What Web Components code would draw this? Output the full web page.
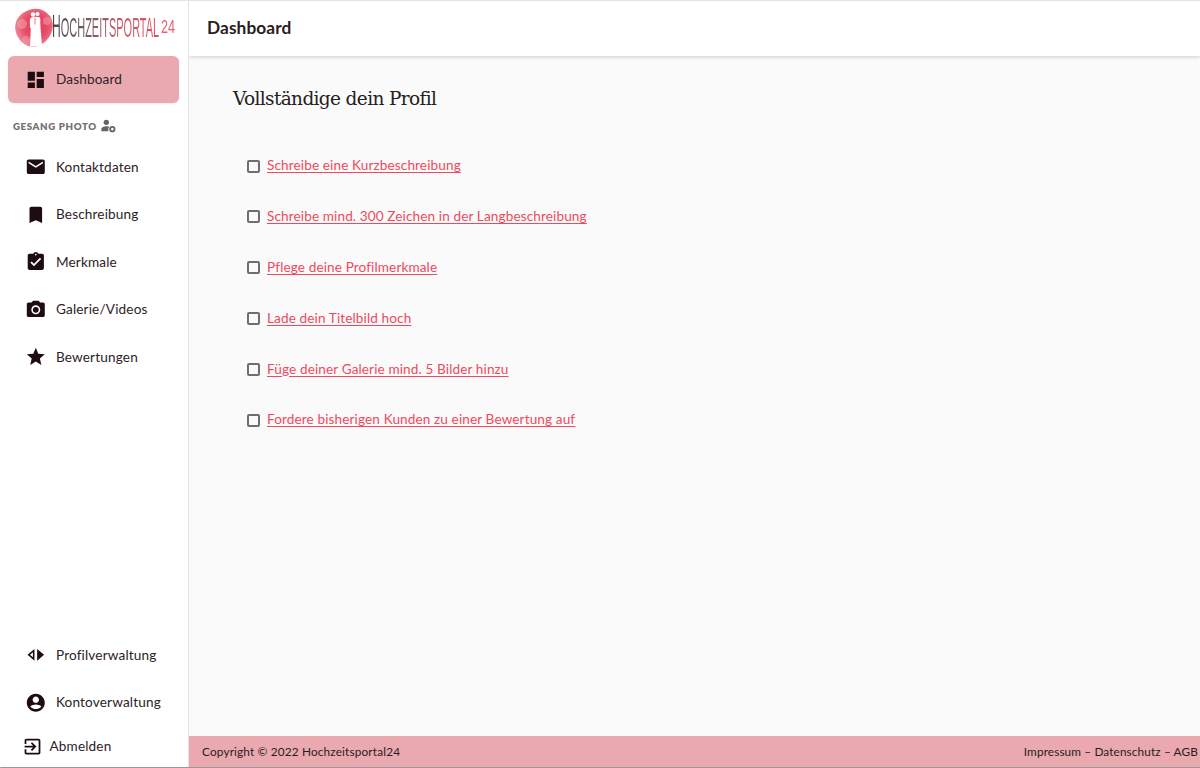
<!DOCTYPE html>
<html lang="de"><head><meta charset="utf-8"><title>Dashboard</title>
<style>
html,body{margin:0;height:100%;overflow:hidden;background:#fafafa}
body{font-family:Lato,"Open Sans",sans-serif;color:#2b1c20}
</style></head><body>
<app-shell>
  <side-bar slot="side">
    <nav-item slot="top" label="Dashboard" icon="dash" active></nav-item>
    <section-label slot="top">GESANG PHOTO</section-label>
    <nav-item slot="top" label="Kontaktdaten" icon="mail"></nav-item>
    <nav-item slot="top" label="Beschreibung" icon="bookmark"></nav-item>
    <nav-item slot="top" label="Merkmale" icon="check"></nav-item>
    <nav-item slot="top" label="Galerie/Videos" icon="camera"></nav-item>
    <nav-item slot="top" label="Bewertungen" icon="star"></nav-item>
    <nav-item slot="bottom" label="Profilverwaltung" icon="arrows"></nav-item>
    <nav-item slot="bottom" label="Kontoverwaltung" icon="account" style="height:47px"></nav-item>
    <nav-item slot="bottom" label="Abmelden" icon="exit" compact></nav-item>
  </side-bar>
  <top-bar slot="head">Dashboard</top-bar>
  <profile-list slot="main" heading="Vollständige dein Profil">
    <todo-item>Schreibe eine Kurzbeschreibung</todo-item>
    <todo-item>Schreibe mind. 300 Zeichen in der Langbeschreibung</todo-item>
    <todo-item>Pflege deine Profilmerkmale</todo-item>
    <todo-item>Lade dein Titelbild hoch</todo-item>
    <todo-item>Füge deiner Galerie mind. 5 Bilder hinzu</todo-item>
    <todo-item>Fordere bisherigen Kunden zu einer Bewertung auf</todo-item>
  </profile-list>
  <site-footer slot="foot"></site-footer>
</app-shell>
<script>
const ICONS={
 dash:'<path d="M3 13h8V3H3v10zm0 8h8v-6H3v6zm10 0h8V11h-8v10zm0-18v6h8V3h-8z"/>',
 mail:'<path d="M20 4H4c-1.1 0-2 .9-2 2v12c0 1.1.9 2 2 2h16c1.100 0 2-.9 2-2V6c0-1.100-.9-2-2-2zm0 4-8 5-8-5V6l8 5 8-5v2z"/>',
 bookmark:'<path d="M17 3H7c-1.100 0-2 .9-2 2v16l7-3 7 3V5c0-1.100-.9-2-2-2z"/>',
 check:'<path d="M19 3h-4.180C14.400 1.840 13.300 1 12 1s-2.400.84-2.820 2H5c-1.100 0-2 .9-2 2v14c0 1.100.9 2 2 2h14c1.100 0 2-.9 2-2V5c0-1.100-.9-2-2-2zm-7 0c.55 0 1 .45 1 1s-.45 1-1 1-1-.45-1-1 .45-1 1-1zm-2 14-4-4 1.410-1.410L10 14.170l6.590-6.590L18 9l-8 8z"/>',
 camera:'<circle cx="12" cy="12" r="3.200"/><path d="M9 2 7.170 4H4c-1.100 0-2 .9-2 2v12c0 1.100.9 2 2 2h16c1.100 0 2-.9 2-2V6c0-1.100-.9-2-2-2h-3.170L15 2H9zm3 15c-2.760 0-5-2.240-5-5s2.240-5 5-5 5 2.240 5 5-2.240 5-5 5z"/>',
 star:'<path d="M12 17.270 18.180 21l-1.640-7.030L22 9.240l-7.190-.61L12 2 9.190 8.630 2 9.240l5.460 4.730L5.820 21z"/>',
 arrows:'<path fill-rule="evenodd" d="M10.500 5.500v13L2.800 12l7.700-6.500zM8.800 9.200 5.500 12l3.300 2.800V9.200z"/><path d="M13.500 5.500 21.200 12l-7.700 6.500v-13z"/>',
 account:'<path d="M12 2C6.480 2 2 6.480 2 12s4.480 10 10 10 10-4.480 10-10S17.520 2 12 2zm0 3c1.930 0 3.500 1.570 3.500 3.500S13.930 12 12 12s-3.500-1.570-3.500-3.500S10.070 5 12 5zm0 14c-2.030 0-4.430-.82-6.140-2.880C7.550 14.800 9.680 14 12 14s4.450.8 6.140 2.120C16.430 18.180 14.030 19 12 19z"/>',
 exit:'<path d="M10.090 15.590 11.500 17l5-5-5-5-1.410 1.410L12.670 11H3v2h9.670l-2.580 2.590zM19 3H5c-1.110 0-2 .9-2 2v4h2V5h14v14H5v-4H3v4c0 1.100.89 2 2 2h14c1.100 0 2-.9 2-2V5c0-1.100-.9-2-2-2z"/>'
};
function def(name,html){
  customElements.define(name,class extends HTMLElement{
    connectedCallback(){
      if(this.shadowRoot)return;
      const s=this.attachShadow({mode:'open'});
      s.innerHTML=typeof html==='function'?html(this):html;
    }
  });
}
def('app-shell',`<style>
:host{display:grid;grid-template-columns:189px 1fr;grid-template-rows:56px 1fr 32px;height:768px;width:1200px;background:#fafafa;position:relative;overflow:hidden}
.s{grid-row:1/4;grid-column:1;display:flex;z-index:2}
.h{grid-column:2;grid-row:1;z-index:1;display:flex}
.m{grid-column:2;grid-row:2;display:flex}
.f{grid-column:2;grid-row:3;display:flex}
.line{position:absolute;left:0;right:0;top:0;height:1px;background:#e4e4e4;z-index:3}
.bot{position:absolute;left:0;right:0;bottom:0;height:1.500px;background:#9b9698;z-index:3;border-bottom-left-radius:6px}
</style><div class="line"></div><div class="s"><slot name="side"></slot></div><div class="h"><slot name="head"></slot></div><div class="m"><slot name="main"></slot></div><div class="f"><slot name="foot"></slot></div><div class="bot"></div>`);
def('side-bar',`<style>
:host{display:flex;flex-direction:column;width:188px;background:#fff;border-right:1px solid #e2e2e2;box-sizing:content-box}
.logo{height:56px;flex:none;display:flex;align-items:center;padding-left:14px;box-sizing:border-box}
.mark{width:40px;height:40px;flex:none;margin-right:-2px}
.w{width:109px;flex:none;height:30px;display:flex;align-items:center;margin-top:-1px}
.txt{font:400 28px "Liberation Sans",sans-serif;white-space:nowrap;transform:scaleX(.392);transform-origin:0 50%;display:inline-block;line-height:30px;background:linear-gradient(90deg,#4f4549 0,#6a5b5e 30%,#c25a68 60%,#e0505f 100%);-webkit-background-clip:text;background-clip:text;color:transparent}
.txt b{font-weight:400;font-size:31px}
.n{font:400 18px "Liberation Sans",sans-serif;color:#e2606f;transform:scaleX(.7);transform-origin:0 50%;display:inline-block;width:14px;white-space:nowrap;margin-top:-2px}
.top{flex:1;display:flex;flex-direction:column}
.bottom{display:flex;flex-direction:column;padding-bottom:1px}
</style><div class="logo"><svg class="mark" viewBox="0 0 40 40"><defs><radialGradient id="g" cx=".55" cy=".45" r=".55"><stop offset="0" stop-color="#e23a56"/><stop offset=".6" stop-color="#e64f67"/><stop offset="1" stop-color="#ee8593"/></radialGradient><filter id="b" x="-10%" y="-10%" width="120%" height="120%"><feGaussianBlur stdDeviation=".5"/></filter></defs><path d="M19 1c5-1 10 .500 13.500 3.500 3 2.500 5.500 5.500 6 10 .8 5-.2 10-2.700 13.500-2.800 4.500-7.500 9-13.500 10.500-5.500 1-10-.500-14-4C5 31.500 2 27 1.300 21.500.800 16 2.500 11 6 7.500 9.500 4 14 1.500 19 1z" fill="url(#g)" filter="url(#b)"/><circle cx="8" cy="16" r="5" fill="#f4a3ae" opacity=".55" filter="url(#b)"/><circle cx="33" cy="13" r="4" fill="#f4a3ae" opacity=".5" filter="url(#b)"/><circle cx="12" cy="32" r="4" fill="#f29ba7" opacity=".5" filter="url(#b)"/><circle cx="19" cy="6.500" r="2.300" fill="#fff"/><circle cx="23.500" cy="6" r="2.100" fill="#fff"/><path d="M16.500 10c2-1.500 7-1.800 9-.7 1 .8 1 3 .8 5.200l.3 6 1.400 17.500-12 .5.800-18-.8-1-.2-7z" fill="#fff"/><path d="M21 9.500v7" stroke="#e8536a" stroke-width=".8"/></svg><div class="w"><span class="txt"><b>H</b>OCHZEITSPORTAL</span></div><span class="n">24</span></div><div class="top"><slot name="top"></slot></div><div class="bottom"><slot name="bottom"></slot></div>`);
def('nav-item',el=>{
  const compact=el.hasAttribute('compact'),active=el.hasAttribute('active');
  return `<style>
:host{display:block;margin:0 9px 0 8px;flex:none;height:${compact?'41px':active?'47px':'47.500px'}}
.r{display:flex;align-items:center;height:100%;box-sizing:border-box;padding-left:${compact?'14px':'16px'};border-radius:6px;${active?'background:#e9a9ae;box-shadow:0 1px 2px rgba(0,0,0,.08);':''}font:400 13.600px Lato,sans-serif;color:#2e2326;letter-spacing:.15px}
svg{width:${compact?'21px':'21.600px'};height:${compact?'21px':'21.600px'};margin:0 ${compact?'6.500px':'9.200px'} 0 ${compact?'0':'1.200px'};fill:#1d0c12;flex:none}
span{position:relative;top:-.5px}
</style><div class="r"><svg viewBox="0 0 24 24">${ICONS[el.getAttribute('icon')]}</svg><span>${el.getAttribute('label')}</span></div>`});
def('section-label',`<style>
:host{display:flex;align-items:center;height:40.500px;flex:none;padding:5px 0 0 13px;box-sizing:border-box;font:800 9.700px Lato,sans-serif;letter-spacing:.62px;color:#777074}
svg{width:16px;height:16px;margin-left:3px;fill:#6a6265}
</style><slot></slot><svg viewBox="0 0 24 24"><circle cx="9.500" cy="6.500" r="4"/><path d="M9.500 12.500c-3.500 0-7.500 1.800-7.500 4.500v3h10.500v-3.500c0-1.300.5-2.500 1.300-3.500-1.300-.4-2.800-.5-4.300-.5z"/><path fill-rule="evenodd" d="M18.500 12a4.700 4.700 0 1 0 0 9.400 4.700 4.700 0 0 0 0-9.400zm0 2.800a1.900 1.900 0 1 1 0 3.800 1.900 1.900 0 0 1 0-3.800z"/></svg>`);
def('top-bar',`<style>
:host{display:flex;align-items:center;flex:1;height:56px;background:#fff;padding-left:18px;box-sizing:border-box;box-shadow:0 1px 4px rgba(0,0,0,.18);font:700 17.300px Lato,sans-serif;color:#2a1d20;letter-spacing:.1px}
span{position:relative;top:-.5px}
</style><span><slot></slot></span>`);
def('profile-list',el=>`<style>
:host{display:block;flex:1;padding:29px 0 0 44px;box-sizing:border-box}
h2{margin:0 0 27px;font:400 18.500px/28px "DejaVu Serif","Liberation Serif",serif;letter-spacing:-.64px;color:#242022}
.l{display:flex;flex-direction:column;padding-left:14px}
</style><h2>${el.getAttribute('heading')}</h2><div class="l"><slot></slot></div>`);
def('todo-item',`<style>
:host{display:flex;align-items:center;height:50.800px;gap:7px}
.b{width:9px;height:9px;border:2px solid #6e6e6e;border-radius:2px;background:#fafafa;flex:none;margin-top:1.500px}
a{font:400 13.600px Lato,sans-serif;color:#ee4a5f;text-decoration:underline;text-underline-offset:2px;letter-spacing:.11px}
</style><span class="b"></span><a href="#"><slot></slot></a>`);
def('site-footer',`<style>
:host{display:flex;flex:1;align-items:center;justify-content:space-between;background:#e9a9ae;padding:0 2px 2px 13px;box-sizing:border-box;font:400 11.800px Lato,sans-serif;color:#2c1c20;letter-spacing:.16px}
span+span{letter-spacing:.12px}
</style><span>Copyright © 2022 Hochzeitsportal24</span><span>Impressum – Datenschutz – AGB</span>`);
</script>
</body></html>
